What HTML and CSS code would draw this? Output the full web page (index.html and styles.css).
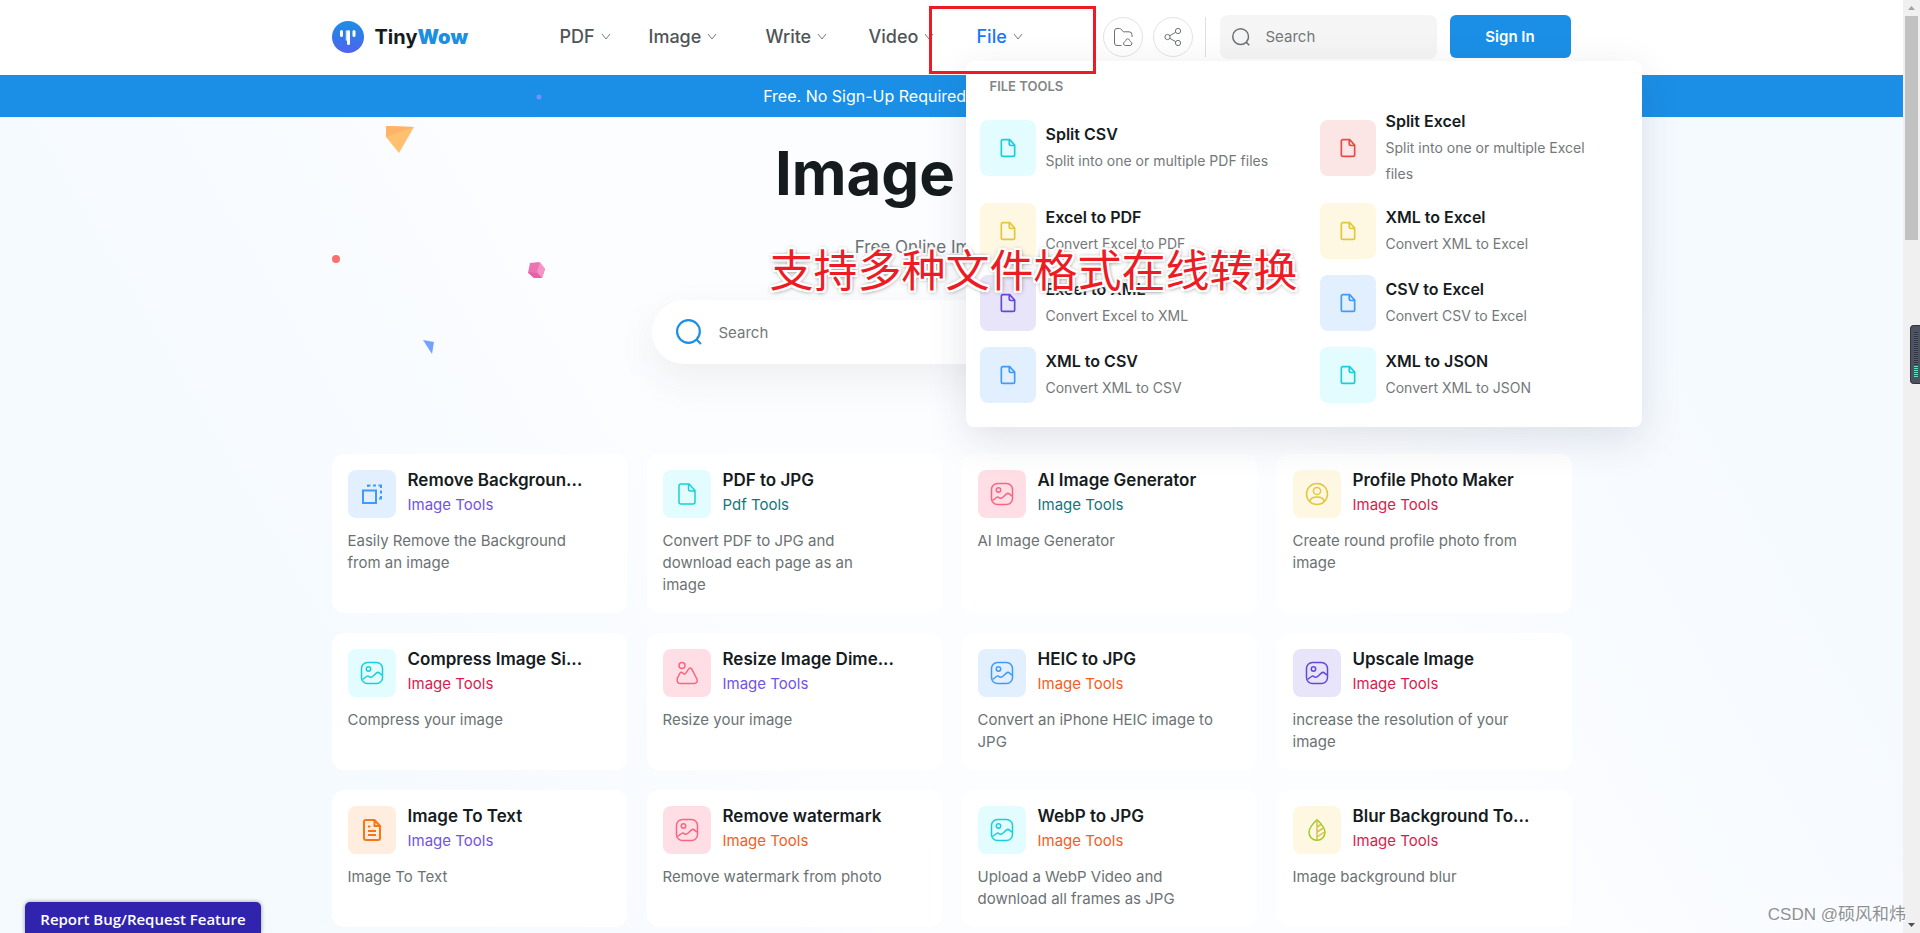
FILE: index.html
```html
<!DOCTYPE html>
<html lang="en">
<head>
<meta charset="utf-8">
<title>Image Tools - TinyWow</title>
<link rel="stylesheet" href="styles.css">
</head>
<body>
<svg class="sprite" aria-hidden="true">
  <symbol id="chevron" viewBox="0 0 10 7"><path d="M1 1l4 5 4-5" /></symbol>
  <symbol id="file" viewBox="0 0 24 24"><path d="M6.500 2H14l6 6.500V20a2 2 0 0 1-2 2H6a2 2 0 0 1-2-2V4a2 2 0 0 1 2-2zM13.500 2.300V7a2 2 0 0 0 2 2H20" /></symbol>
  <symbol id="picture" viewBox="0 0 24 24"><rect x="1.500" y="1.500" width="21" height="21" rx="6" /><circle cx="8.500" cy="8" r="2.200" /><path d="M2.500 18.500l4-3c1-.7 2-.6 2.800.2.900.8 2 .8 3 0l4-3.600c1-.9 2.300-.9 3.300 0l2.400 2" /></symbol>
  <symbol id="hills" viewBox="0 0 24 24"><circle cx="7" cy="4.500" r="3" /><path d="M2.500 17l2.300-4.700c.8-1.500 2-1.500 3-.3.900 1.400 2.200 1.500 3 .1l2.700-4c1.100-1.700 2.500-1.600 3.400.2l5 9.700c1 2.300-.2 4.500-2.700 4.500H5c-2.500 0-3.500-2.500-2.500-5.500z" /></symbol>
  <symbol id="person" viewBox="0 0 24 24"><circle cx="12" cy="12" r="10.500" /><circle cx="12" cy="9" r="3.600" /><path d="M4.800 19.500c.6-3 3.500-4.500 7.200-4.500s6.600 1.500 7.200 4.500" /></symbol>
  <symbol id="layers" viewBox="0 0 24 24"><rect x="3" y="8.500" width="13" height="12.500" /><path d="M8 5V3.500h2.500M13 3.500h3M18.500 3.500H21V6M21 8.500v3M21 14v2.500h-2" /></symbol>
  <symbol id="document" viewBox="0 0 24 24"><path d="M6 2h8.500L20 8v12a2 2 0 0 1-2 2H6a2 2 0 0 1-2-2V4a2 2 0 0 1 2-2zM14.500 2v6H20M8 8.500h2.500M8 13h8M8 17h8" /></symbol>
  <symbol id="drop" viewBox="0 0 24 24"><path d="M12 1.800C8 5.500 4 9.500 4 14.300a8 8 0 0 0 16 0C20 9.500 16 5.500 12 1.800z" /><path class="inner" d="M12 2v20M12 9l4-2.500M12 14l6.500-4M12 19l7.500-5" /></symbol>
  <symbol id="search" viewBox="0 0 24 24"><circle cx="11.500" cy="11.500" r="10.500" /><path d="M18.500 18.500l4.500 4.500" /></symbol>
</svg>

<div class="window">
  <div class="page">
    <header class="header">
      <div class="container bar">
        <a class="logo" href="#">
          <svg width="32" height="32" viewBox="0 0 32 32" aria-hidden="true">
            <defs><linearGradient id="brand" x1="0" y1="0" x2="0" y2="1"><stop offset="0" stop-color="#1b8fe6" /><stop offset="1" stop-color="#4f63ec" /></linearGradient></defs>
            <circle cx="16" cy="16" r="16" fill="url(#brand)" />
            <path d="M9.500 10.500v4M16.500 10.500v12M22 10.500v4" fill="none" stroke="#fff" stroke-width="3" stroke-linecap="round" />
            <path d="M14.500 10v9" stroke="#d5e6fc" stroke-width="1.500" stroke-linecap="round" />
          </svg>
          <span>Tiny<b>Wow</b></span>
        </a>
        <nav class="nav">
          <a href="#">PDF<svg class="chevron"><use href="#chevron" /></svg></a>
          <a href="#">Image<svg class="chevron"><use href="#chevron" /></svg></a>
          <a href="#">Write<svg class="chevron"><use href="#chevron" /></svg></a>
          <a href="#">Video<svg class="chevron"><use href="#chevron" /></svg></a>
          <a href="#" class="active">File<svg class="chevron"><use href="#chevron" /></svg></a>
        </nav>
        <div class="actions">
          <button class="round" aria-label="My files"><svg width="20" height="20" viewBox="0 0 20 20"><path d="M8.500 18.500H4A2.500 2.500 0 0 1 1.500 16V4A2.500 2.500 0 0 1 4 1.500h2.500c1 0 1.600.4 2.100 1.200l.8 1.300c.3.500.8.800 1.400.8H16a3 3 0 0 1 3 3V10M12.300 18.500a2 2 0 0 1-.8-3.700c1-.5 1.200-1 1.500-1.800.6-1.700 2.800-1.700 3.400 0 .3.800.5 1.300 1.500 1.800a2 2 0 0 1-.8 3.700z" /></svg></button>
          <button class="round" aria-label="Share"><svg width="20" height="20" viewBox="0 0 20 20"><circle cx="4.500" cy="10" r="2.600" /><circle cx="15" cy="4" r="2.600" /><circle cx="15" cy="16" r="2.600" /><path d="M6.800 8.700l5.900-3.400M6.800 11.300l5.900 3.400" /></svg></button>
          <span class="divider"></span>
          <label class="quick-search"><svg width="18" height="18"><use href="#search" /></svg><input type="search" placeholder="Search" aria-label="Search tools"></label>
          <button class="sign-in">Sign In</button>
        </div>

        <div class="menu">
          <h2>File Tools</h2>
          <div class="menu-grid">
            <a class="menu-item" href="#"><span class="tile cyan"><svg><use href="#file" /></svg></span><span><strong>Split CSV</strong><small>Split into one or multiple PDF files</small></span></a>
            <a class="menu-item" href="#"><span class="tile red"><svg><use href="#file" /></svg></span><span><strong>Split Excel</strong><small>Split into one or multiple Excel files</small></span></a>
            <a class="menu-item" href="#"><span class="tile yellow"><svg><use href="#file" /></svg></span><span><strong>Excel to PDF</strong><small>Convert Excel to PDF</small></span></a>
            <a class="menu-item" href="#"><span class="tile yellow"><svg><use href="#file" /></svg></span><span><strong>XML to Excel</strong><small>Convert XML to Excel</small></span></a>
            <a class="menu-item" href="#"><span class="tile purple"><svg><use href="#file" /></svg></span><span><strong>Excel to XML</strong><small>Convert Excel to XML</small></span></a>
            <a class="menu-item" href="#"><span class="tile blue"><svg><use href="#file" /></svg></span><span><strong>CSV to Excel</strong><small>Convert CSV to Excel</small></span></a>
            <a class="menu-item" href="#"><span class="tile blue"><svg><use href="#file" /></svg></span><span><strong>XML to CSV</strong><small>Convert XML to CSV</small></span></a>
            <a class="menu-item" href="#"><span class="tile cyan"><svg><use href="#file" /></svg></span><span><strong>XML to JSON</strong><small>Convert XML to JSON</small></span></a>
          </div>
        </div>
        <div class="highlight"></div>
        <p class="caption" lang="zh">支持多种文件格式在线转换</p>
      </div>
    </header>

    <p class="banner">Free. No Sign-Up Required. No Limits. Try it today</p>

    <main class="container">
      <svg class="confetti" width="220" height="280" viewBox="0 0 220 280" aria-hidden="true">
        <circle cx="207" cy="22" r="2.500" fill="#7590ff" />
        <path d="M54 51l28 1-15 26-13-16z" fill="#ffc06f" /><path d="M54 51l28 1-28 10z" fill="#ffb368" />
        <circle cx="4" cy="184" r="4" fill="#ff6d6d" />
        <path d="M198 188l9-1 6 7-3 9h-8l-6-5z" fill="#ed72b3" /><path d="M208 187l5 7-3 9-5-6z" fill="#f594c6" /><path d="M196 197l9 1 5 5h-8z" fill="#e95fa5" />
        <path d="M91 265l11 2-2 12z" fill="#74a0ff" />
      </svg>
      <section class="hero">
        <h1>Image Tools</h1>
        <p>Free Online Image Tools</p>
        <label class="big-search"><svg width="26" height="26"><use href="#search" /></svg><input type="search" placeholder="Search" aria-label="Search image tools"></label>
      </section>

      <section class="cards">
        <a class="card" href="#"><span class="tile blue bold"><svg><use href="#layers" /></svg></span><strong>Remove Backgroun...</strong><em class="violet">Image Tools</em><small>Easily Remove the Background<br>from an image</small></a>
        <a class="card" href="#"><span class="tile cyan"><svg><use href="#file" /></svg></span><strong>PDF to JPG</strong><em class="teal">Pdf Tools</em><small>Convert PDF to JPG and<br>download each page as an<br>image</small></a>
        <a class="card" href="#"><span class="tile pink"><svg><use href="#picture" /></svg></span><strong>AI Image Generator</strong><em class="teal">Image Tools</em><small>AI Image Generator</small></a>
        <a class="card" href="#"><span class="tile yellow"><svg><use href="#person" /></svg></span><strong>Profile Photo Maker</strong><em class="crimson">Image Tools</em><small>Create round profile photo from<br>image</small></a>
        <a class="card" href="#"><span class="tile cyan"><svg><use href="#picture" /></svg></span><strong>Compress Image Si...</strong><em class="crimson">Image Tools</em><small>Compress your image</small></a>
        <a class="card" href="#"><span class="tile pink"><svg><use href="#hills" /></svg></span><strong>Resize Image Dime...</strong><em class="violet">Image Tools</em><small>Resize your image</small></a>
        <a class="card" href="#"><span class="tile blue"><svg><use href="#picture" /></svg></span><strong>HEIC to JPG</strong><em class="orange">Image Tools</em><small>Convert an iPhone HEIC image to<br>JPG</small></a>
        <a class="card" href="#"><span class="tile purple"><svg><use href="#picture" /></svg></span><strong>Upscale Image</strong><em class="crimson">Image Tools</em><small>increase the resolution of your<br>image</small></a>
        <a class="card" href="#"><span class="tile peach bold"><svg><use href="#document" /></svg></span><strong>Image To Text</strong><em class="violet">Image Tools</em><small>Image To Text</small></a>
        <a class="card" href="#"><span class="tile pink"><svg><use href="#picture" /></svg></span><strong>Remove watermark</strong><em class="orange">Image Tools</em><small>Remove watermark from photo</small></a>
        <a class="card" href="#"><span class="tile cyan"><svg><use href="#picture" /></svg></span><strong>WebP to JPG</strong><em class="orange">Image Tools</em><small>Upload a WebP Video and<br>download all frames as JPG</small></a>
        <a class="card" href="#"><span class="tile lime"><svg><use href="#drop" /></svg></span><strong>Blur Background To...</strong><em class="crimson">Image Tools</em><small>Image background blur</small></a>
      </section>
    </main>
  </div>

  <div class="scrollbar" aria-hidden="true">
    <svg width="17" height="16" viewBox="0 0 17 16"><path d="M5 10l3.500-4 3.500 4z" fill="#a3a3a3" /></svg>
    <div class="thumb"></div>
    <svg class="down" width="17" height="16" viewBox="0 0 17 16"><path d="M5 6l3.500 4L12 6z" fill="#505050" /></svg>
  </div>
</div>

<div class="meter" aria-hidden="true"></div>
<button class="report">Report Bug/Request Feature</button>
<span class="credit">CSDN @硕风和炜</span>
</body>
</html>
```
FILE: styles.css
```css
* { box-sizing: border-box; }

body {
  margin: 0;
  height: 100vh;
  overflow: hidden;
  position: relative;
  font-family: Inter, "Noto Sans CJK SC", sans-serif;
  font-size: 15px;
  color: #161c1e;
}

h1, h2, p { margin: 0; }
a { color: inherit; text-decoration: none; }
button, input { font: inherit; border: 0; padding: 0; }
svg { fill: none; flex: none; }
.sprite { position: absolute; width: 0; height: 0; }

.window { display: grid; grid-template-columns: minmax(0, 1fr) 17px; height: 100vh; }
.page {
  overflow: hidden;
  background: linear-gradient(60deg, #f5faff 18%, #fcfdff 42%, #fcfdff 62%, #f5faff 84%);
}
.container { width: 100%; max-width: 1240px; margin: 0 auto; position: relative; }

/* Header */
.header { background: #fff; position: relative; z-index: 2; }
.bar { display: flex; align-items: center; height: 75px; padding: 0 1px 2px 0; }
.logo { display: flex; align-items: center; gap: 11px; width: 228px; font-size: 20px; font-weight: 700; }
.logo b { color: #1b8fe6; }
.nav { display: grid; grid-template-columns: 89px 117px 103px 108px auto; font-size: 18px; font-weight: 500; color: #4f5557; }
.nav a { display: flex; align-items: center; gap: 6px; }
.nav .active { color: #1677ff; }
.chevron { width: 10px; height: 7px; stroke: #777c7e; stroke-width: 1; }
.actions { display: flex; align-items: center; gap: 10px; margin-left: auto; }
.round {
  display: grid; place-items: center; width: 40px; height: 40px;
  border: 1px solid #e2e3e4; border-radius: 50%; background: #fff;
  stroke: #6c7274; stroke-width: 1;
}
.divider { width: 1px; height: 40px; margin: 0 4px 0 2px; background: #dcdedf; }
.quick-search {
  display: flex; align-items: center; gap: 16px; width: 217px; height: 44px; padding: 0 12px;
  border-radius: 8px; background: #f5f5f5; stroke: #6c7274; stroke-width: 2;
}
.quick-search input, .big-search input { width: 100%; min-width: 0; background: none; outline: 0; }
input::placeholder { color: #74787a; opacity: 1; }
.sign-in { width: 121px; height: 43px; margin-left: 3px; border-radius: 6px; background: #1b8fe6; color: #fff; font-weight: 600; }

/* Dropdown */
.menu {
  position: absolute; top: 61px; left: 634px; width: 676px; padding: 14px 14px 24px;
  border-radius: 8px; background: #fff; box-shadow: 0 12px 40px rgba(40, 50, 80, 0.13);
}
.menu h2 { padding-left: 10px; font-size: 13px; line-height: 22px; font-weight: 600; text-transform: uppercase; color: #828688; }
.menu-grid { display: grid; grid-template-columns: 340px 1fr; row-gap: 16px; margin-top: 12px; }
.menu-item { display: flex; align-items: center; gap: 10px; padding-right: 24px; }
.menu-item strong { display: block; padding-bottom: 2px; font-size: 16px; line-height: 24px; font-weight: 600; }
.menu-item small { display: block; font-size: 14px; line-height: 26px; color: #74787a; }
.menu-item .tile { width: 56px; height: 56px; stroke-width: 2; }
.menu-item .tile svg { width: 20px; height: 20px; }

.tile { display: grid; place-items: center; flex: none; border-radius: 8px; stroke: currentColor; stroke-width: 1.5; }
.tile svg { width: 24px; height: 24px; }
.bold { stroke-width: 2; }
.cyan { background: #e2fcff; color: #18cfd9; }
.red { background: #fbe5e5; color: #e84b46; }
.yellow { background: #fef8e2; color: #e3c63c; }
.purple { background: #e8e4f9; color: #6448d8; }
.blue { background: #e1efff; color: #3f9afa; }
.pink { background: #ffdfe5; color: #fa6480; }
.peach { background: #ffeddf; color: #fb7413; }
.lime { background: #fef8e2; color: #9ccb1f; }
.inner { stroke: #d5c14c; }

.highlight { position: absolute; top: 6px; left: 597px; width: 167px; height: 68px; border: 3px solid #ed1c24; }
.caption {
  position: absolute; top: 241px; left: 438px; white-space: nowrap;
  font-family: "Noto Sans CJK SC", sans-serif; font-size: 44px; line-height: 54px; color: #ed1c24;
  text-shadow: 2px 0 #fff, -2px 0 #fff, 0 2px #fff, 0 -2px #fff, 2px 2px #fff, -2px -2px #fff, 2px -2px #fff, -2px 2px #fff, 0 0 5px #777, 1px 1px 5px #777;
}

.banner { background: #1b8fe6; color: #fff; text-align: center; font-size: 16px; line-height: 42px; }

/* Hero */
.confetti { position: absolute; top: -42px; left: 0; }
.hero { display: flex; flex-direction: column; align-items: center; height: 337px; }
.hero h1 { margin-top: 18px; font-size: 60px; line-height: 76px; font-weight: 700; }
.hero p { margin-top: 24px; font-size: 17px; line-height: 24px; color: #6c7274; }
.big-search {
  display: flex; align-items: center; gap: 17px; width: 600px; height: 64px; margin-top: 41px; padding: 0 24px;
  border-radius: 32px; background: #fff; stroke: #1b8fe6; stroke-width: 2;
  box-shadow: 0 15px 40px rgba(40, 50, 60, 0.07);
}

/* Tool cards */
.cards { display: grid; grid-template-columns: repeat(4, minmax(0, 1fr)); gap: 20px; }
.card {
  display: grid; grid-template-columns: 48px 1fr; grid-template-rows: 24px 24px auto; column-gap: 12px; align-content: start;
  min-height: 137px; padding: 16px 16px 17px; border-radius: 12px; background: #fff;
}
.card .tile { grid-row: span 2; width: 48px; height: 48px; }
.card strong { font-size: 17px; line-height: 20px; font-weight: 600; white-space: nowrap; }
.card em { font-style: normal; line-height: 22px; }
.card small { grid-column: 1 / -1; margin-top: 12px; padding-right: 16px; font-size: 15px; line-height: 22px; color: #6c7274; }
.violet { color: #7352e8; }
.teal { color: #12777b; }
.crimson { color: #d81c4e; }
.orange { color: #f75c1e; }

/* Window edges */
.scrollbar { display: flex; flex-direction: column; align-items: center; background: #f0f0f0; }
.thumb { width: 13px; height: 24%; background: #c1c1c1; }
.down { margin-top: auto; }
.meter {
  position: absolute; right: 0; top: 325px; width: 10px; height: 59px; border: 1px solid #32343d; border-right: 0;
  border-radius: 4px 0 0 4px;
  background:
    repeating-linear-gradient(#5be3b5 0 1px, #4d5260 1px 2px) 3px 40px / 4px 12px no-repeat,
    repeating-linear-gradient(#30333d 0 1px, #596071 1px 2px) 3px 6px / 4px 34px no-repeat,
    #4d5362;
}
.report {
  position: absolute; left: 25px; bottom: 0; width: 236px; height: 31px; padding-top: 3px; border-radius: 5px 5px 0 0;
  background: #3023ae; color: #fff; font-family: "Open Sans", sans-serif; font-size: 15px; font-weight: 600; white-space: nowrap;
  box-shadow: 0 0 4px rgba(0, 0, 0, 0.4);
}
.credit {
  position: absolute; right: 14px; bottom: 6px; font-family: "Liberation Sans", "Noto Sans CJK SC", sans-serif;
  font-size: 17px; line-height: 24px; color: #8e9193; text-shadow: 1px 1px #fff;
}
```
